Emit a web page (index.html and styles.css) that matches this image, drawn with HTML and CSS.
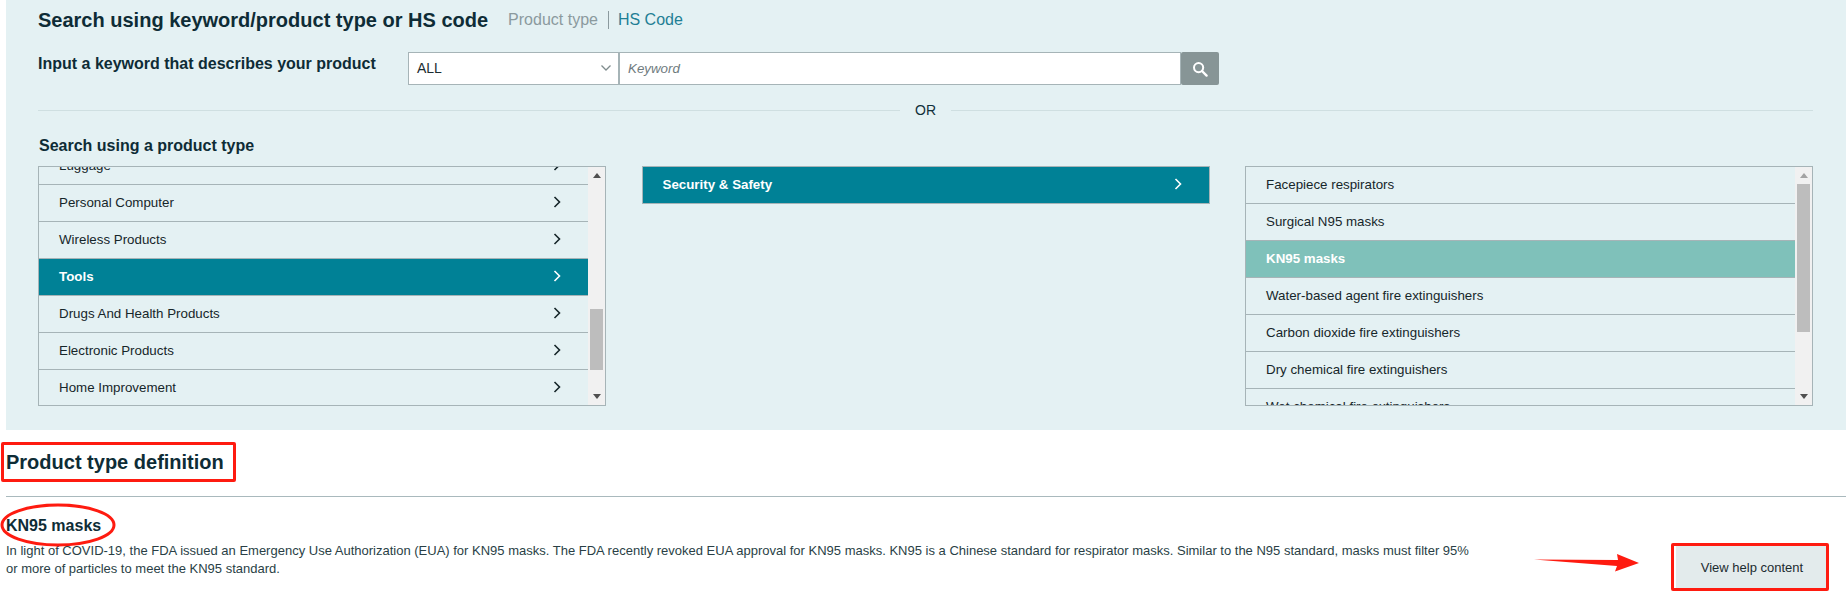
FILE: index.html
```html
<!DOCTYPE html>
<html lang="en">
<head>
<meta charset="utf-8">
<title>Search using keyword/product type or HS code</title>
<link rel="stylesheet" href="styles.css">
</head>
<body>
<main class="page">
  <section class="panel">
    <div class="title-row">
      <h1 class="title">Search using keyword/product type or HS code</h1>
      <div class="tabs"><span class="tab-muted">Product type</span><span class="tab-link">HS Code</span></div>
    </div>
    <div class="search-row">
      <label class="search-label">Input a keyword that describes your product</label>
      <div class="search-controls">
        <div class="select"><span>ALL</span>
          <svg class="select-caret" width="12" height="8" viewBox="0 0 12 8"><path d="M1.5 1.5 6 6l4.5-4.5" fill="none" stroke="#7f8c8d" stroke-width="1.3"/></svg>
        </div>
        <div class="input">Keyword</div>
        <div class="search-btn">
          <svg width="18" height="18" viewBox="0 0 18 18"><circle cx="7.6" cy="7.6" r="4.6" fill="none" stroke="#fff" stroke-width="2"/><path d="m11 11 4.600 4.600" stroke="#fff" stroke-width="2.400" stroke-linecap="round"/></svg>
        </div>
      </div>
    </div>
    <div class="divider"><span>OR</span></div>
    <h2 class="subtitle">Search using a product type</h2>
    <div class="lists">
      <div class="list">
        <div class="viewport">
          <ul class="rows rows-scrolled">
            <li class="row">Luggage<svg class="chev" viewBox="0 0 8 12"><path d="M1.5 1 6.500 6l-5 5" fill="none" stroke="currentColor" stroke-width="1.600"/></svg></li>
            <li class="row">Personal Computer<svg class="chev" viewBox="0 0 8 12"><path d="M1.5 1 6.500 6l-5 5" fill="none" stroke="currentColor" stroke-width="1.600"/></svg></li>
            <li class="row">Wireless Products<svg class="chev" viewBox="0 0 8 12"><path d="M1.5 1 6.500 6l-5 5" fill="none" stroke="currentColor" stroke-width="1.600"/></svg></li>
            <li class="row row-active">Tools<svg class="chev" viewBox="0 0 8 12"><path d="M1.5 1 6.500 6l-5 5" fill="none" stroke="currentColor" stroke-width="1.600"/></svg></li>
            <li class="row">Drugs And Health Products<svg class="chev" viewBox="0 0 8 12"><path d="M1.5 1 6.500 6l-5 5" fill="none" stroke="currentColor" stroke-width="1.600"/></svg></li>
            <li class="row">Electronic Products<svg class="chev" viewBox="0 0 8 12"><path d="M1.5 1 6.500 6l-5 5" fill="none" stroke="currentColor" stroke-width="1.600"/></svg></li>
            <li class="row">Home Improvement<svg class="chev" viewBox="0 0 8 12"><path d="M1.5 1 6.500 6l-5 5" fill="none" stroke="currentColor" stroke-width="1.600"/></svg></li>
          </ul>
        </div>
        <div class="scrollbar">
          <svg class="sb-arrow" viewBox="0 0 8 5"><path d="M4 0 8 5H0z" fill="#505050"/></svg>
          <div class="sb-track sb-track-end"><div class="sb-thumb sb-thumb-left"></div></div>
          <svg class="sb-arrow" viewBox="0 0 8 5"><path d="M0 0h8L4 5z" fill="#505050"/></svg>
        </div>
      </div>
      <div class="list list-plain">
        <div class="row row-active row-single">Security &amp; Safety<svg class="chev" viewBox="0 0 8 12"><path d="M1.5 1 6.500 6l-5 5" fill="none" stroke="currentColor" stroke-width="1.600"/></svg></div>
      </div>
      <div class="list">
        <div class="viewport">
          <ul class="rows">
            <li class="row">Facepiece respirators</li>
            <li class="row">Surgical N95 masks</li>
            <li class="row row-selected">KN95 masks</li>
            <li class="row">Water-based agent fire extinguishers</li>
            <li class="row">Carbon dioxide fire extinguishers</li>
            <li class="row">Dry chemical fire extinguishers</li>
            <li class="row">Wet chemical fire extinguishers</li>
          </ul>
        </div>
        <div class="scrollbar">
          <svg class="sb-arrow" viewBox="0 0 8 5"><path d="M4 0 8 5H0z" fill="#a3a3a3"/></svg>
          <div class="sb-track"><div class="sb-thumb sb-thumb-right"></div></div>
          <svg class="sb-arrow" viewBox="0 0 8 5"><path d="M0 0h8L4 5z" fill="#505050"/></svg>
        </div>
      </div>
    </div>
  </section>
  <section class="definition">
    <h2 class="def-title">Product type definition</h2>
    <hr class="def-rule">
    <div class="def-body">
      <div class="def-text">
        <h3 class="def-name">KN95 masks</h3>
        <p class="def-copy">In light of COVID-19, the FDA issued an Emergency Use Authorization (EUA) for KN95 masks. The FDA recently revoked EUA approval for KN95 masks. KN95 is a Chinese standard for respirator masks. Similar to the N95 standard, masks must filter 95% or more of particles to meet the KN95 standard.</p>
      </div>
      <button class="help-btn" type="button">View help content</button>
    </div>
  </section>
  <div class="mark mark-title"></div>
  <div class="mark mark-btn"></div>
  <svg class="mark-ellipse" width="118" height="44" viewBox="0 0 118 44"><ellipse cx="58" cy="22" rx="56" ry="20" fill="none" stroke="#fe1b10" stroke-width="3"/></svg>
  <svg class="mark-arrow" width="106" height="20" viewBox="0 0 106 20"><path d="M0 6.500 84 7 83 1 105 10 81 18.500 83 13z" fill="#fe1b10"/></svg>
</main>
</body>
</html>
```
FILE: styles.css
```css
* { box-sizing: border-box; }
html, body { margin: 0; padding: 0; background: #fff; overflow: hidden; }
body { font-family: "Liberation Sans", Arial, sans-serif; color: #10303a; }
ul { list-style: none; margin: 0; padding: 0; }
h1, h2, h3, p { margin: 0; }

.page { position: relative; width: 1846px; height: 600px; overflow: hidden; }

.panel { margin-left: 6px; height: 430px; background: #e4f1f3; padding: 8px 33px 0 32px; }

.title-row { display: flex; align-items: center; height: 24px; }
.title { font-size: 20px; line-height: 24px; font-weight: 700; color: #0e2c36; }
.tabs { display: flex; align-items: center; margin-left: 20px; font-size: 16px; line-height: 20px; }
.tab-muted { color: #8b9a9e; padding-right: 10px; border-right: 1px solid #8b9a9e; line-height: 18px; }
.tab-link { color: #1f7f95; padding-left: 9px; }

.search-row { display: flex; margin-top: 20px; height: 33px; }
.search-label { width: 370px; font-size: 16px; font-weight: 700; line-height: 24px; color: #0e2c36; }
.search-controls { display: flex; height: 33px; }
.select { width: 212px; display: flex; align-items: center; justify-content: space-between; padding: 0 6px 2px 8px; background: #fff; border: 1px solid #a6b4b7; border-right-width: 2px; font-size: 14px; color: #1c2c30; }
.input { width: 561px; display: flex; align-items: center; padding-left: 8px; background: #fff; border: 1px solid #a6b4b7; border-left: 0; font-size: 13.33px; font-style: italic; color: #6f7b7e; }
.search-btn { width: 38px; display: flex; align-items: center; justify-content: center; background: #879596; border-radius: 2px; }

.divider { display: flex; align-items: center; margin-top: 8px; height: 34px; font-size: 14px; color: #10303a; }
.divider::before, .divider::after { content: ""; flex: 1; height: 1px; background: #cfdfe1; }
.divider span { padding: 0 15px; }

.subtitle { margin-top: 8px; padding-left: 1px; font-size: 16px; line-height: 22px; font-weight: 700; color: #0e2c36; }

.lists { display: flex; justify-content: space-between; margin-top: 9px; }
.list { display: flex; width: 568px; height: 240px; border: 1px solid #a6b4b7; }
.list-plain { display: block; height: auto; align-self: flex-start; }
.viewport { flex: 1; overflow: hidden; min-width: 0; }
.rows-scrolled { margin-top: -19px; }

.row { display: flex; align-items: center; justify-content: space-between; height: 37px; padding: 0 27px 2px 20px; font-size: 13.33px; color: #16262a; border-bottom: 1px solid #a6b4b7; white-space: nowrap; }
.row-active { background: #008196; color: #fff; font-weight: 700; }
.row-selected { background: #7fc1ba; color: #fff; font-weight: 700; }
.row-single { height: 36px; border-bottom: 0; }
.chev { width: 8px; height: 12px; flex: none; }

.scrollbar { width: 17px; flex: none; display: flex; flex-direction: column; align-items: center; background: #f1f1f1; }
.sb-arrow { width: 8px; height: 5px; flex: none; margin: 6px 0; }
.sb-track { flex: 1; width: 100%; display: flex; flex-direction: column; padding: 0 2px; }
.sb-track-end { justify-content: flex-end; padding-bottom: 18px; }
.sb-thumb { width: 100%; background: #bdbdbd; }
.sb-thumb-left { height: 61px; }
.sb-thumb-right { height: 148px; }

.definition { padding: 20px 18px 0 6px; }
.def-title { font-size: 20px; line-height: 24px; font-weight: 700; color: #0e2c36; }
.def-rule { margin: 22px -18px 0 0; height: 1px; border: 0; background: #a9b9bd; }
.def-body { display: flex; justify-content: space-between; align-items: flex-start; margin-top: 19px; }
.def-text { width: 1470px; }
.def-name { font-size: 16px; line-height: 20px; font-weight: 700; color: #0e2c36; }
.def-copy { margin-top: 6px; font-size: 13px; line-height: 18px; color: #2a3f46; }
.help-btn { margin-top: 30px; width: 152px; height: 42px; border: 0; background: #e3ebec; font-family: inherit; font-size: 13px; color: #1c2c30; }

.mark { position: absolute; border: 3px solid #fe1b10; border-radius: 2px; }
.mark-title { left: 1px; top: 442px; width: 235px; height: 40px; }
.mark-btn { left: 1671px; top: 543px; width: 158px; height: 48px; }
.mark-ellipse { position: absolute; left: 0; top: 503px; }
.mark-arrow { position: absolute; left: 1534px; top: 553px; }
```
